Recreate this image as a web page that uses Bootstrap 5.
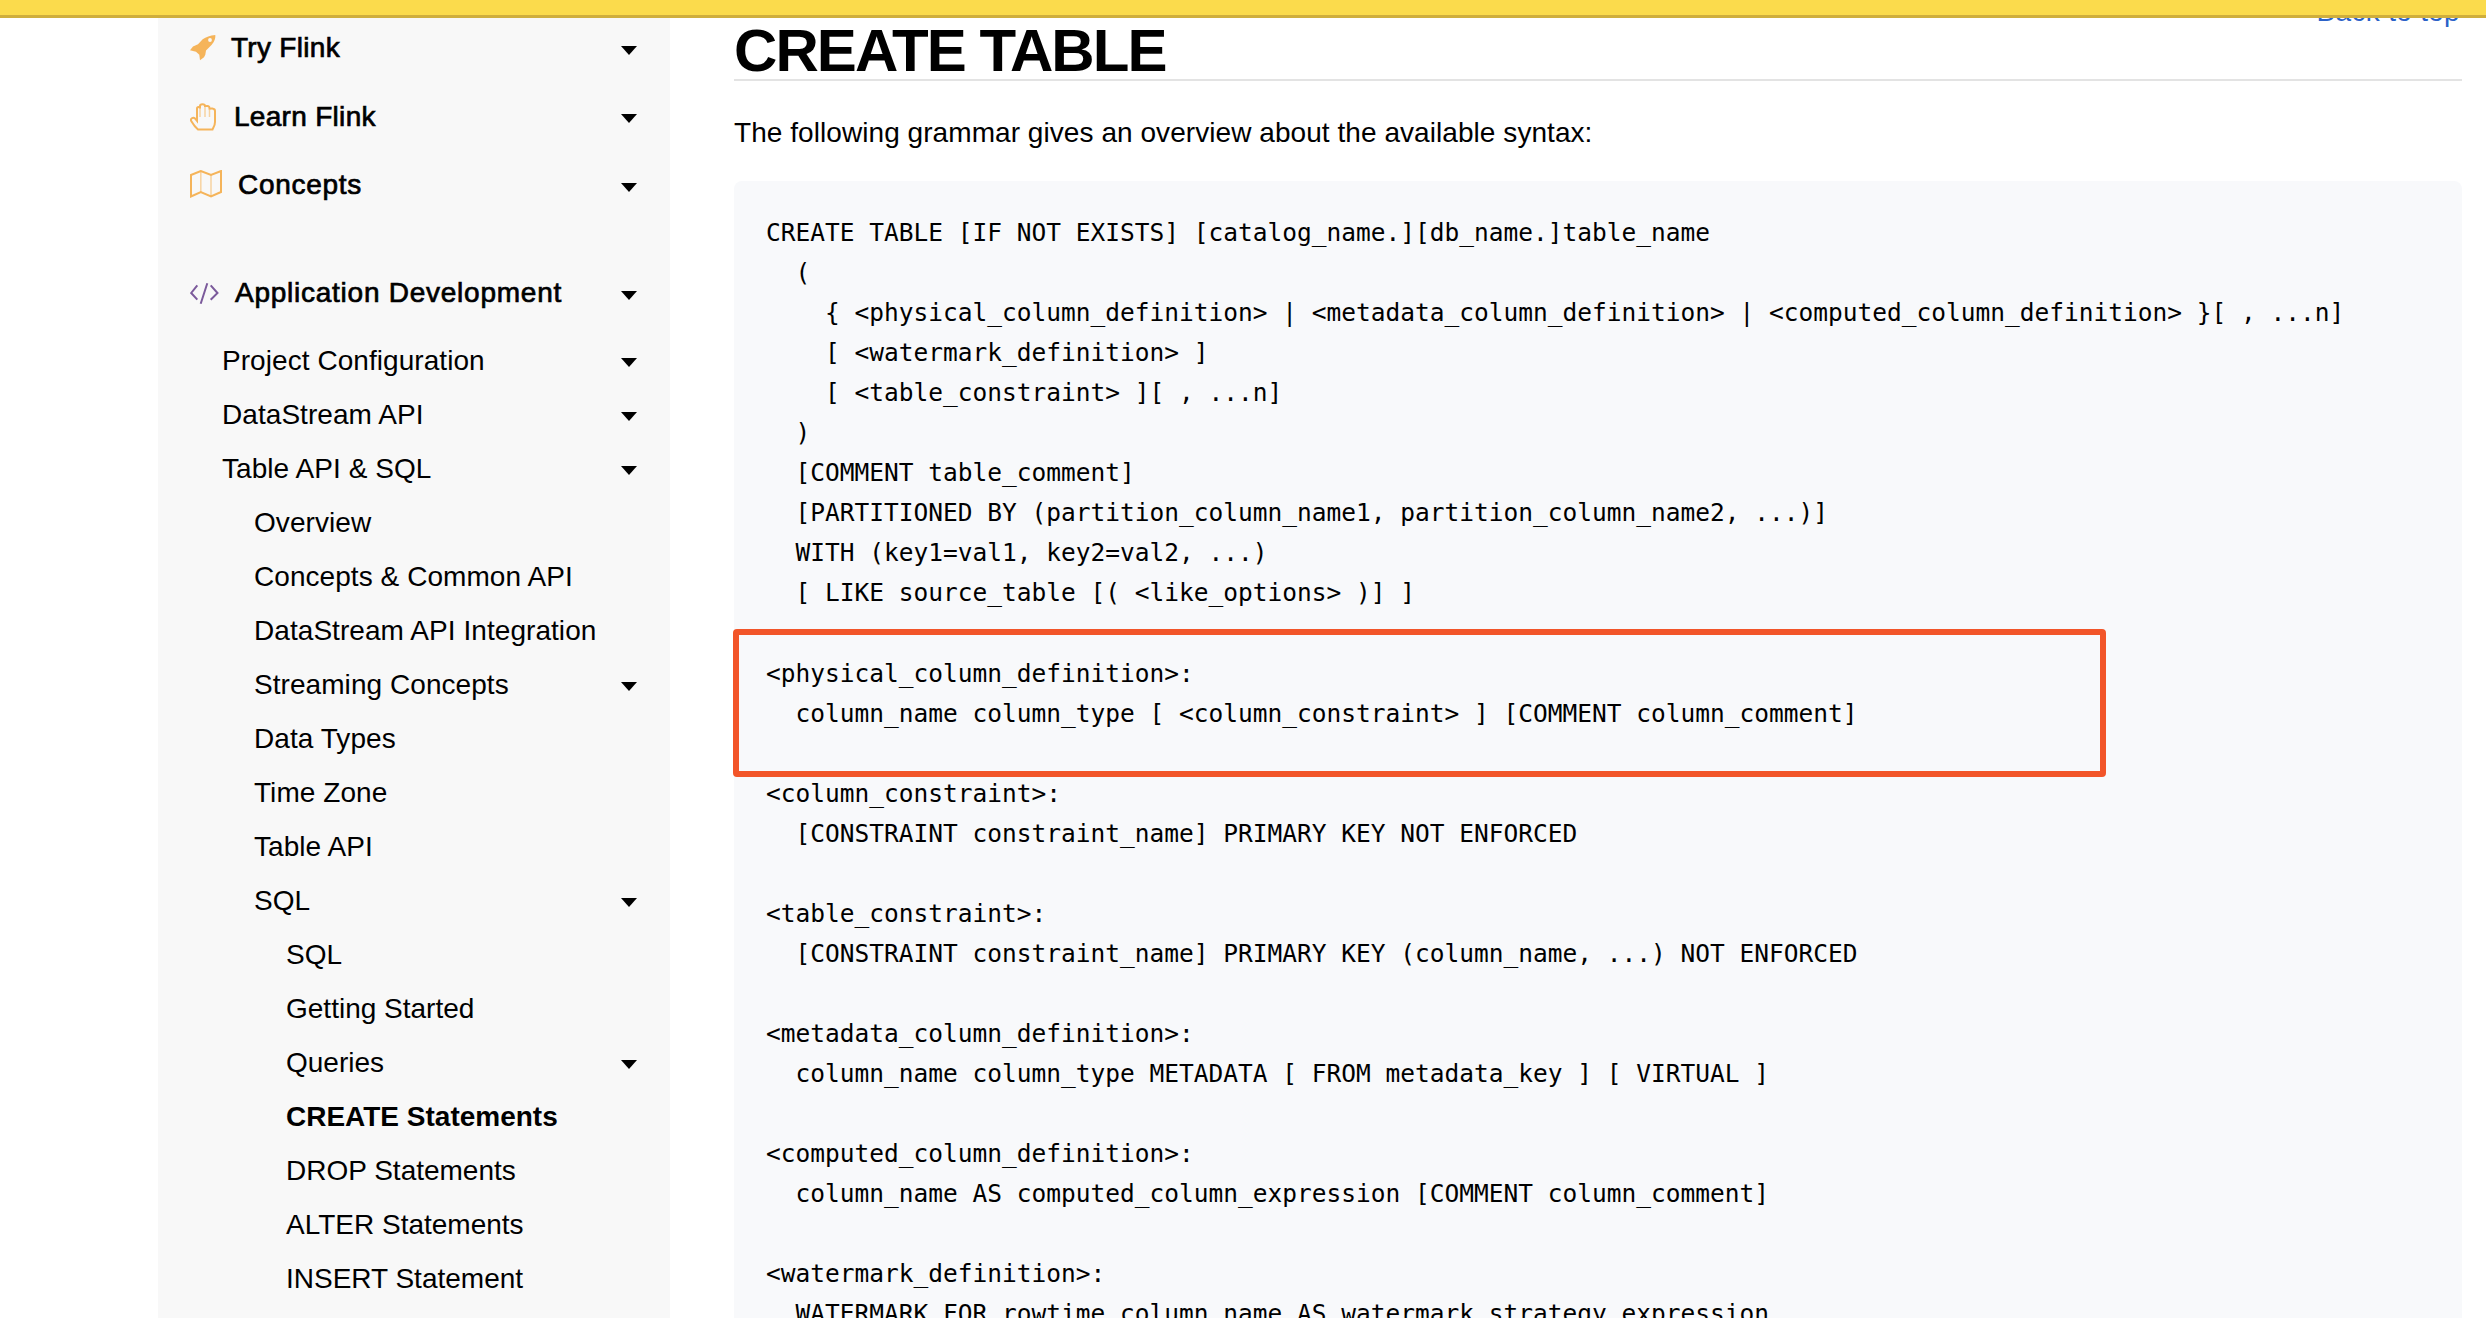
<!DOCTYPE html>
<html lang="en">
<head>
<meta charset="utf-8">
<title>CREATE TABLE</title>
<link href="https://cdn.jsdelivr.net/npm/bootstrap@5.3.0/dist/css/bootstrap.min.css" rel="stylesheet">
<style>
html, body { height: 100%; overflow: hidden; }
body { font-family: "Liberation Sans", Arial, sans-serif; color: #000; background: #fff; }
.top-strip { height: 18px; background: #fbdb4c; border-bottom: 3px solid #cfae3c; position: relative; z-index: 5; }
.page-cols { height: calc(100% - 18px); padding-left: 158px; padding-right: 24px; }
.side-col { width: 512px; flex: none; background: #f8f8f8; padding: 0 33px 0 32px; overflow: hidden; font-size: 28px; }
.side-row { height: 54px; align-items: center; }
.lvl-1, .lvl-2 { letter-spacing: .06px; }
.caret-mark { flex: none; margin-left: auto; margin-top: 4px; }
.lvl-1, .lvl-2, .lvl-3 { padding-top: 2px; }
.lvl-1 .caret-mark, .lvl-2 .caret-mark, .lvl-3 .caret-mark { margin-top: 2px; }
.side-top { height: 60px; margin-bottom: 8.5px; gap: 15px; -webkit-text-stroke: .7px #000; letter-spacing: .3px; }
.side-concepts { letter-spacing: .7px; }
.side-app { margin-top: 48px; margin-bottom: 10px; letter-spacing: .75px; }
.lvl-1 { padding-left: 32px; }
.lvl-2 { padding-left: 64px; }
.lvl-3 { padding-left: 96px; }
.side-bold { font-weight: 700; }
.ico-map { margin-top: -3px; }
.main-col { margin-left: 64px; flex: 1; min-width: 0; }
.back-top { color: #2b62c8; font-size: 28px; line-height: 32px; margin: -22px 0 -5px; text-align: right; padding-right: 2px; letter-spacing: .3px; }
.back-link { color: inherit; text-decoration: none; }
.page-h1 { font-size: 60px; font-weight: 700; line-height: 56px; margin: 0; border-bottom: 2px solid #e3e3e3; letter-spacing: -1.9px; }
.lead-p { font-size: 28px; line-height: 40px; margin: 32px 0 28px; letter-spacing: .06px; }
.code-wrap { position: relative; background: #f8f9fb; border-radius: 8px; padding: 32px; }
.code-wrap pre { font-family: "DejaVu Sans Mono", monospace; font-size: 24.5px; line-height: 40.05px; margin: 0; color: #000; overflow: visible; }
.anno-box { position: absolute; left: -1px; top: 448px; width: 1373px; height: 148px; border: 6px solid #f25529; border-radius: 4px; }
</style>
</head>
<body>
<div class="top-strip"></div>
<div class="d-flex page-cols">
  <nav class="side-col">
    <div class="d-flex side-row side-top">
      <svg width="26" height="26" viewBox="0 0 26 26"><path d="M25.300 0C20 .5 16 2 12.700 4.300L8 9.300 3 11.500 0 15.300l6 1.400 3.300 3L10 25.300l4-3 1.300-2.500.7-4.300 5-5C23.500 8 25.800 4 25.300 0z" fill="#f5b45a"/><circle cx="20" cy="5" r="1.900" fill="#f8f8f8"/></svg>
      Try Flink<svg class="caret-mark" width="16" height="9"><path d="M0 0h16l-8 9z"/></svg>
    </div>
    <div class="d-flex side-row side-top">
      <svg width="29" height="28" viewBox="0 0 29 28" fill="none" stroke="#f5b45a" stroke-width="2"><path d="M8 26.500C5 24 3 21 1.200 18c-1.200-2 1.800-4.500 3.800-2.500L7 18V5.500c0-2 3-2 3 0V3c0-2.200 5-2.200 5 0v1c0-1.500 4.500-1.500 4.500 1v1.500c0-1.500 5.500-1.500 5.500 1.500v11c0 4-2 6-2.500 7.500z"/><path d="M10 5v9M15 4v10M19.500 6v8" stroke-opacity=".55" stroke-width="1.500"/></svg>
      Learn Flink<svg class="caret-mark" width="16" height="9"><path d="M0 0h16l-8 9z"/></svg>
    </div>
    <div class="d-flex side-row side-top side-concepts">
      <svg class="ico-map" width="33" height="28" viewBox="0 0 33 28" fill="none" stroke="#f5b45a" stroke-width="2"><path d="M1 5l9.800-4L21 5l10-4v21l-10 4.500L10.800 22 1 26.500z"/><path d="M10.800 1v21M21 5v21" stroke-opacity=".55" stroke-width="1.500"/></svg>
      Concepts<svg class="caret-mark" width="16" height="9"><path d="M0 0h16l-8 9z"/></svg>
    </div>
    <div class="d-flex side-row side-top side-app">
      <svg width="30" height="21" viewBox="0 0 30 21" fill="none" stroke="#7b5a9b" stroke-width="2"><path d="M7.300 2.300L1.200 10l6.100 6.700M17.300 .3L10.700 20.700M20.700 2.300L27.500 10l-6.800 6.700"/></svg>
      Application Development<svg class="caret-mark" width="16" height="9"><path d="M0 0h16l-8 9z"/></svg>
    </div>
    <div class="d-flex side-row lvl-1">Project Configuration<svg class="caret-mark" width="16" height="9"><path d="M0 0h16l-8 9z"/></svg></div>
    <div class="d-flex side-row lvl-1">DataStream API<svg class="caret-mark" width="16" height="9"><path d="M0 0h16l-8 9z"/></svg></div>
    <div class="d-flex side-row lvl-1">Table API &amp; SQL<svg class="caret-mark" width="16" height="9"><path d="M0 0h16l-8 9z"/></svg></div>
    <div class="d-flex side-row lvl-2">Overview</div>
    <div class="d-flex side-row lvl-2">Concepts &amp; Common API</div>
    <div class="d-flex side-row lvl-2">DataStream API Integration</div>
    <div class="d-flex side-row lvl-2">Streaming Concepts<svg class="caret-mark" width="16" height="9"><path d="M0 0h16l-8 9z"/></svg></div>
    <div class="d-flex side-row lvl-2">Data Types</div>
    <div class="d-flex side-row lvl-2">Time Zone</div>
    <div class="d-flex side-row lvl-2">Table API</div>
    <div class="d-flex side-row lvl-2">SQL<svg class="caret-mark" width="16" height="9"><path d="M0 0h16l-8 9z"/></svg></div>
    <div class="d-flex side-row lvl-3">SQL</div>
    <div class="d-flex side-row lvl-3">Getting Started</div>
    <div class="d-flex side-row lvl-3">Queries<svg class="caret-mark" width="16" height="9"><path d="M0 0h16l-8 9z"/></svg></div>
    <div class="d-flex side-row lvl-3 side-bold">CREATE Statements</div>
    <div class="d-flex side-row lvl-3">DROP Statements</div>
    <div class="d-flex side-row lvl-3">ALTER Statements</div>
    <div class="d-flex side-row lvl-3">INSERT Statement</div>
  </nav>
  <main class="main-col">
    <div class="back-top"><a class="back-link" href="#">Back to top</a></div>
    <h1 class="page-h1">CREATE TABLE</h1>
    <p class="lead-p">The following grammar gives an overview about the available syntax:</p>
    <div class="code-wrap">
<pre>CREATE TABLE [IF NOT EXISTS] [catalog_name.][db_name.]table_name
  (
    { &lt;physical_column_definition&gt; | &lt;metadata_column_definition&gt; | &lt;computed_column_definition&gt; }[ , ...n]
    [ &lt;watermark_definition&gt; ]
    [ &lt;table_constraint&gt; ][ , ...n]
  )
  [COMMENT table_comment]
  [PARTITIONED BY (partition_column_name1, partition_column_name2, ...)]
  WITH (key1=val1, key2=val2, ...)
  [ LIKE source_table [( &lt;like_options&gt; )] ]

&lt;physical_column_definition&gt;:
  column_name column_type [ &lt;column_constraint&gt; ] [COMMENT column_comment]

&lt;column_constraint&gt;:
  [CONSTRAINT constraint_name] PRIMARY KEY NOT ENFORCED

&lt;table_constraint&gt;:
  [CONSTRAINT constraint_name] PRIMARY KEY (column_name, ...) NOT ENFORCED

&lt;metadata_column_definition&gt;:
  column_name column_type METADATA [ FROM metadata_key ] [ VIRTUAL ]

&lt;computed_column_definition&gt;:
  column_name AS computed_column_expression [COMMENT column_comment]

&lt;watermark_definition&gt;:
  WATERMARK FOR rowtime_column_name AS watermark_strategy_expression</pre>
      <div class="anno-box"></div>
    </div>
  </main>
</div>
<script src="https://cdn.jsdelivr.net/npm/bootstrap@5.3.0/dist/js/bootstrap.bundle.min.js"></script>
</body>
</html>
